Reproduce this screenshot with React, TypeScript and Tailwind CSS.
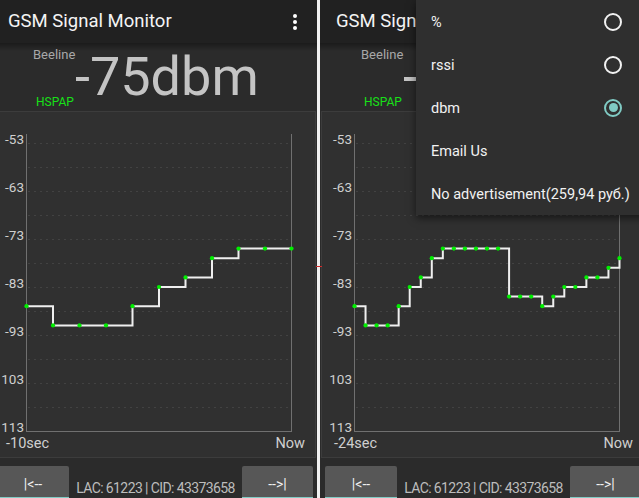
import React from 'react';

const LEFT_DATA = [-87, -91, -91, -91, -87, -83, -81, -77, -75, -75, -75];
const RIGHT_DATA = [
  -87, -91, -91, -91, -87, -83, -81, -77, -75, -75, -75, -75, -75, -75, -85, -85, -85, -87, -85, -83, -83,
  -81, -81, -79, -77,
];

const PLOT_L = 34.5;
const PLOT_R = 299.5;
const TOP = 143;
// 10 dB per 48px
const yFor = (v: number) => TOP + (-53 - v) * 4.8;

const LABELS = ['-53', '-63', '-73', '-83', '-93', '103', '113'];

function SignalChart({ data, start }: { data: number[]; start: string }) {
  const step = (PLOT_R - PLOT_L) / (data.length - 1);
  const pts = data.map((v, i) => [PLOT_L + i * step, yFor(v)]);
  const path = pts.reduce((acc, [x, y], i) => (i === 0 ? `M${x} ${y}` : `${acc} H${x} V${y}`), '');
  const grid = Array.from({ length: 12 }, (_, i) => TOP + i * 24);

  return (
    <svg width={323} height={347} viewBox="1 111 323 347" className="block" fontFamily="Roboto, sans-serif">
      <rect x={1.5} y={111.5} width={322} height={346} fill="#303030" stroke="#3c3c3c" />
      {grid.map((y) => (
        <line key={y} x1={PLOT_L + 2} x2={PLOT_R} y1={y + 0.5} y2={y + 0.5} stroke="#555555" strokeDasharray="1 5" />
      ))}
      <line x1={PLOT_L} x2={PLOT_L} y1={134} y2={432} stroke="#707070" />
      <line x1={PLOT_R} x2={PLOT_R} y1={134} y2={432} stroke="#707070" />
      <line x1={PLOT_L} x2={PLOT_R} y1={431.5} y2={431.5} stroke="#707070" />
      {LABELS.map((t, i) => (
        <text key={t} x={32} y={143.5 + i * 48} textAnchor="end" fontSize={13.5} fill="#cfcfcf">
          {t}
        </text>
      ))}
      <path d={path} fill="none" stroke="#efefef" strokeWidth={2} />
      {pts.map(([x, y], i) => (
        <circle key={i} cx={x} cy={y} r={2.1} fill="#00ee00" />
      ))}
      <text x={14} y={448} fontSize={14.5} fill="#cfcfcf">
        {start}
      </text>
      <text x={313} y={448} textAnchor="end" fontSize={14.5} fill="#cfcfcf">
        Now
      </text>
    </svg>
  );
}

function NavButton({ label }: { label: string }) {
  return (
    <div className="flex h-[34px] items-start justify-center rounded-t-[2px] border-b-[3px] border-[#80cbc4] bg-[#575757] pt-[11px] text-[14px] leading-none text-[#f0f0f0]">
      {label}
    </div>
  );
}

function Phone({ data, start }: { data: number[]; start: string }) {
  return (
    <div className="h-[498px] w-[326px] shrink-0 bg-[#2b2b2b]">
      <div className="flex h-[43px] items-center bg-[#212121] pl-[16px] pr-[21px]">
        <span className="text-[18.5px] leading-none text-[#f4f4f4]">GSM Signal Monitor</span>
        <div className="ml-auto flex flex-col gap-[2px]">
          <span className="h-[4px] w-[4px] rounded-full bg-white" />
          <span className="h-[4px] w-[4px] rounded-full bg-white" />
          <span className="h-[4px] w-[4px] rounded-full bg-white" />
        </div>
      </div>

      <div className="flex h-[68px] bg-[#2b2b2b] bg-[linear-gradient(#1b1b1b,#2b2b2b_8px)]">
        <div className="flex w-[83px] shrink-0 flex-col justify-between pb-[3px] pt-[5px]">
          <span className="pl-[41px] text-[13px] leading-none text-[#a8a8a8]">Beeline</span>
          <span className="pl-[44px] text-[12px] leading-none text-[#18e018]">HSPAP</span>
        </div>
        <div className="pt-[7px] text-[54px] leading-none text-[#c4c4c4]">-75dbm</div>
      </div>

      <div className="pl-[1px]">
        <SignalChart data={data} start={start} />
      </div>

      <div className="flex pl-[5px] pr-[5px] pt-[8px]">
        <div className="w-[72px]">
          <NavButton label="|<--" />
        </div>
        <div className="flex flex-1 justify-center whitespace-nowrap pt-[15px] text-[14px] leading-none tracking-[-0.6px] text-[#bdbdbd]">
          LAC: 61223 | CID: 43373658
        </div>
        <div className="w-[71px]">
          <NavButton label="-->|" />
        </div>
      </div>
    </div>
  );
}

function Radio({ checked }: { checked?: boolean }) {
  return checked ? (
    <span className="flex h-[18px] w-[18px] items-center justify-center rounded-full border-2 border-[#80cbc4]">
      <span className="h-[9px] w-[9px] rounded-full bg-[#80cbc4]" />
    </span>
  ) : (
    <span className="h-[18px] w-[18px] rounded-full border-2 border-[#f2f2f2]" />
  );
}

function OverflowMenu() {
  const items: { label: string; radio?: boolean; checked?: boolean }[] = [
    { label: '%', radio: true },
    { label: 'rssi', radio: true },
    { label: 'dbm', radio: true, checked: true },
    { label: 'Email Us' },
    { label: 'No advertisement(259,94 руб.)' },
  ];
  return (
    <div className="absolute left-[96px] top-0 w-[232px] bg-[#2f2f2f] shadow-[0_3px_8px_rgba(0,0,0,0.55)]">
      {items.map((it) => (
        <div key={it.label} className="flex h-[43px] items-center justify-between pl-[15px] pr-[26px]">
          <span className="translate-y-[2px] whitespace-nowrap text-[14.5px] leading-none text-[#f2f2f2]">
            {it.label}
          </span>
          {it.radio && <Radio checked={it.checked} />}
        </div>
      ))}
    </div>
  );
}

export default function App() {
  return (
    <div className="relative flex h-[498px] w-[639px] overflow-hidden bg-[#2b2b2b] font-[Roboto,sans-serif]">
      <div className="w-[317px] shrink-0 overflow-hidden">
        <div className="-ml-[8px]">
          <Phone data={LEFT_DATA} start="-10sec" />
        </div>
      </div>
      <div className="w-[3px] shrink-0 bg-[#f0f0f0]" />
      <div className="relative w-[319px] shrink-0 overflow-hidden">
        <Phone data={RIGHT_DATA} start="-24sec" />
        <OverflowMenu />
      </div>
      <div className="absolute left-[316px] top-[266px] h-px w-[6px] bg-[#d42a2a]" />
    </div>
  );
}
